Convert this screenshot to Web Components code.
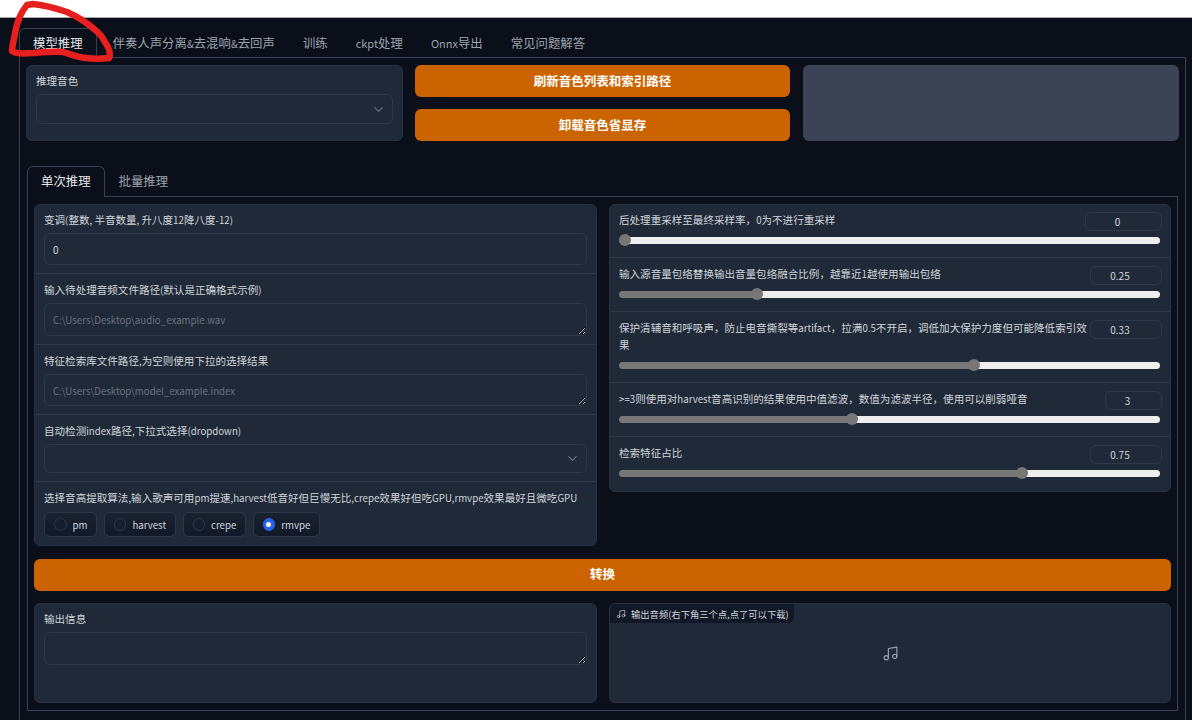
<!DOCTYPE html>
<html lang="zh">
<head>
<meta charset="utf-8">
<title>RVC</title>
<style>
    html, body { margin: 0; height: 720px; overflow: hidden; background: #0b0f19; }
    body { font-family: "Noto Sans CJK SC", "Noto Sans", sans-serif; color: #d1d5db; display: flex; flex-direction: column; }
</style>
</head>
<body>
<top-strip></top-strip>
<app-shell>
    <tab-strip>
        <tab-item active>模型推理</tab-item>
        <tab-item style="margin-left:2px">伴奏人声分离<span style="font-size:10px">&amp;</span>去混响<span style="font-size:10px">&amp;</span>去回声</tab-item>
        <tab-item>训练</tab-item>
        <tab-item><span style="font-size:11px">ckpt</span>处理</tab-item>
        <tab-item><span style="font-size:11px">Onnx</span>导出</tab-item>
        <tab-item>常见问题解答</tab-item>
    </tab-strip>
    <tab-panel>
        <top-row>
            <form-group>
                <text-field kind="select" label="推理音色" h="30" last></text-field>
            </form-group>
            <button-stack>
                <orange-btn>刷新音色列表和索引路径</orange-btn>
                <orange-btn>卸载音色省显存</orange-btn>
            </button-stack>
            <status-box></status-box>
        </top-row>
        <inner-tabs>
            <tab-strip inner>
                <tab-item active>单次推理</tab-item>
                <tab-item>批量推理</tab-item>
            </tab-strip>
            <inner-panel>
                <two-cols>
                    <form-group>
                        <text-field label="变调(整数, 半音数量, 升八度12降八度-12)" value="0" h="32"></text-field>
                        <text-field kind="area" label="输入待处理音频文件路径(默认是正确格式示例)" value="C:\Users\Desktop\audio_example.wav" h="33"></text-field>
                        <text-field kind="area" label="特征检索库文件路径,为空则使用下拉的选择结果" value="C:\Users\Desktop\model_example.index" h="32"></text-field>
                        <text-field kind="select" label="自动检测index路径,下拉式选择(dropdown)" h="29"></text-field>
                        <radio-field label="选择音高提取算法,输入歌声可用pm提速,harvest低音好但巨慢无比,crepe效果好但吃GPU,rmvpe效果最好且微吃GPU" options="pm,harvest,crepe,rmvpe" selected="rmvpe"></radio-field>
                    </form-group>
                    <form-group>
                        <slider-row label="后处理重采样至最终采样率，0为不进行重采样" value="0" f="0" w="77"></slider-row>
                        <slider-row label="输入源音量包络替换输出音量包络融合比例，越靠近1越使用输出包络" value="0.25" f="0.25" w="72"></slider-row>
                        <slider-row label="保护清辅音和呼吸声，防止电音撕裂等artifact，拉满0.5不开启，调低加大保护力度但可能降低索引效|果" value="0.33" f="0.66" w="72"></slider-row>
                        <slider-row label="&gt;=3则使用对harvest音高识别的结果使用中值滤波，数值为滤波半径，使用可以削弱哑音" value="3" f="0.4286" w="57"></slider-row>
                        <slider-row label="检索特征占比" value="0.75" f="0.75" w="72" last></slider-row>
                    </form-group>
                </two-cols>
                <orange-btn>转换</orange-btn>
                <two-cols>
                    <form-group>
                        <text-field kind="area" label="输出信息" h="33" tall last></text-field>
                    </form-group>
                    <audio-box label="输出音频(右下角三个点,点了可以下载)"></audio-box>
                </two-cols>
            </inner-panel>
        </inner-tabs>
    </tab-panel>
</app-shell>
<red-scribble></red-scribble>

<script>
// caja con estilos fijos y un slot, para no repetir lo mismo en cada clase
function simpleBox(name, css) {
    customElements.define(name, class extends HTMLElement {
        constructor() {
            super();
            this.attachShadow({ mode: 'open' });
            this.shadowRoot.innerHTML = `<style>${css}</style><slot></slot>`;
        }
    });
}

// las letras latinas salen mas pequeñas que los caracteres chinos en la captura
const latinSmall = text => text.replace(/[A-Za-z0-9,.\-()=> ]+/g, m => `<span style="font-size:9.7px;line-height:1">${m}</span>`);

simpleBox('top-strip', `:host { display: block; height: 17px; background: #fff; border-bottom: 1px solid #a8a8a8; flex: none; }`);
simpleBox('app-shell', `:host { display: flex; flex-direction: column; flex: 1; min-height: 0; padding: 10px 6px 0 19px; }`);
simpleBox('tab-panel', `:host { display: flex; flex-direction: column; flex: 1; min-height: 0; padding: 7px 6px 0; border: 1px solid #374151; border-width: 0 1px; }`);
simpleBox('top-row', `:host { display: grid; grid-template-columns: 376.5px 375px 1fr; gap: 12.5px; height: 76px; }`);
simpleBox('button-stack', `:host { display: flex; flex-direction: column; gap: 12px; }`);
simpleBox('status-box', `:host { display: block; background: #3b4354; border-radius: 6px; }`);
simpleBox('inner-tabs', `:host { display: block; margin: 25px 1px 0; }`);
simpleBox('inner-panel', `:host { display: flex; flex-direction: column; gap: 12.5px; padding: 7px 6px; border: 1px solid #374151; border-top: 0; }`);
simpleBox('two-cols', `:host { display: grid; grid-template-columns: 563px 562px; gap: 12px; align-items: start; }`);
simpleBox('form-group', `:host { display: block; background: #1f2937; border-radius: 6px; border: 1px solid #273142; box-sizing: border-box; overflow: hidden; }`);

class TabStrip extends HTMLElement {
    constructor() {
        super();
        this.attachShadow({ mode: 'open' });
    }

    connectedCallback() {
        this.shadowRoot.innerHTML = `
        <style>
            :host { display: flex; height: 29px; position: relative; border-bottom: 1px solid #374151; flex: none; }
            :host([inner]) { height: 30px; }
        </style>
        <slot></slot>`;
    }
}
customElements.define('tab-strip', TabStrip);

class TabItem extends HTMLElement {
    constructor() {
        super();
        this.attachShadow({ mode: 'open' });
        this.shadowRoot.innerHTML = `
        <style>
            :host {
                display: flex; align-items: baseline; height: 100%; padding: 4px 13px 0;
                font-size: 12.4px; line-height: 20px; color: #9ca3af; white-space: nowrap; box-sizing: border-box;
                border: 1px solid transparent; border-bottom: 0; border-radius: 6px 6px 0 0;
            }
            :host([active]) { color: #e5e7eb; border-color: #374151; background: #0b0f19; height: calc(100% + 1px); position: relative; }
        </style>
        <slot></slot>`;
    }
}
customElements.define('tab-item', TabItem);

class OrangeBtn extends HTMLElement {
    constructor() {
        super();
        this.attachShadow({ mode: 'open' });
        this.shadowRoot.innerHTML = `
        <style>
            :host {
                display: flex; align-items: center; justify-content: center; height: 32px;
                background: #cb6300; border-radius: 6px; box-sizing: border-box;
                color: #fff; font-size: 12.5px; font-weight: 700; padding-bottom: 2px;
            }
        </style>
        <slot></slot>`;
    }
}
customElements.define('orange-btn', OrangeBtn);

const CHEVRON = `<svg width="11" height="11" viewBox="0 0 24 24" fill="none" stroke="#6b7280" stroke-width="2.6" stroke-linecap="round" stroke-linejoin="round"><path d="M4 8l8 8 8-8"/></svg>`;

class TextField extends HTMLElement {
    constructor() {
        super();
        this.attachShadow({ mode: 'open' });
    }

    connectedCallback() {
        const kind = this.getAttribute('kind') || 'input';
        const value = this.getAttribute('value') || '';
        const h = this.getAttribute('h') || 32;
        let control;
        if (kind === 'area') {
            control = `<textarea class="box" spellcheck="false" style="height:${h}px">${value}</textarea>`;
        } else if (kind === 'select') {
            control = `<div class="box sel" style="height:${h}px">${CHEVRON}</div>`;
        } else {
            control = `<div class="box val" style="height:${h}px">${value}</div>`;
        }
        this.shadowRoot.innerHTML = `
        <style>
            :host { display: block; padding: 8px 9px; border-bottom: 1px solid #2d3748; }
            :host(:first-child) { padding-top: 7px; }
            :host([last]) { border-bottom: 0; }
            :host([tall]) { padding-bottom: 37px; }
            label { display: block; font-size: 10.55px; line-height: 16px; color: #d1d5db; margin-bottom: 5px; }
            .box {
                display: flex; align-items: center; box-sizing: border-box; width: 100%;
                background: #1f2937; border: 1px solid #2d3748; border-radius: 6px;
                padding: 0 8px; font: 9.7px/14px "Noto Sans CJK SC", "Noto Sans", sans-serif;
            }
            .val { color: #d1d5db; font-size: 10px; padding-top: 1px; }
            .sel { justify-content: flex-end; padding-right: 8px; }
            textarea { display: block; margin: 0; padding-top: 9px !important; color: #6b7280; outline: 0; resize: vertical; color-scheme: dark; }
        </style>
        <label>${latinSmall(this.getAttribute('label'))}</label>
        ${control}`;
    }
}
customElements.define('text-field', TextField);

class RadioField extends HTMLElement {
    constructor() {
        super();
        this.attachShadow({ mode: 'open' });
    }

    connectedCallback() {
        const sel = this.getAttribute('selected');
        const opts = this.getAttribute('options').split(',').map(o => `
            <span class="pill">
                <i class="dot ${o === sel ? 'on' : ''}"></i>${o}
            </span>`).join('');
        this.shadowRoot.innerHTML = `
        <style>
            :host { display: block; padding: 9px 9px 8px; }
            label { display: block; font-size: 10.55px; line-height: 14px; color: #d1d5db; margin-bottom: 7px; white-space: nowrap; }
            .opts { display: flex; gap: 6.4px; }
            .pill {
                display: flex; align-items: center; gap: 6px; height: 25px; padding: 0 9px;
                box-sizing: border-box; border: 1px solid #2d3748; border-radius: 6px;
                background: linear-gradient(to bottom, #1a2230, #111827);
                font-size: 9.7px; color: #d1d5db;
            }
            .dot { width: 12.5px; height: 12.5px; border-radius: 50%; background: #161e2d; border: 1px solid #2d3748; box-sizing: border-box; flex: none; }
            .dot.on { background: #2563eb; border-color: #2563eb; position: relative; }
            .dot.on::after { content: ""; position: absolute; left: 2.75px; top: 2.75px; width: 5px; height: 5px; border-radius: 50%; background: #fff; }
        </style>
        <label>${latinSmall(this.getAttribute('label'))}</label>
        <div class="opts">${opts}</div>`;
    }
}
customElements.define('radio-field', RadioField);

class SliderRow extends HTMLElement {
    constructor() {
        super();
        this.attachShadow({ mode: 'open' });
    }

    connectedCallback() {
        const f = parseFloat(this.getAttribute('f'));
        // cada linea va en su propio bloque, la | marca donde se corta
        const lines = this.getAttribute('label').split('|').map(l => `<span class="ln">${latinSmall(l)}</span>`).join('');
        this.shadowRoot.innerHTML = `
        <style>
            :host { display: block; padding: 8px 8px 13.5px 9px; border-bottom: 1px solid #2d3748; }
            :host(:first-child) { padding-top: 7px; }
            :host([last]) { border-bottom: 0; padding-bottom: 14.5px; }
            .head { display: flex; justify-content: space-between; align-items: flex-start; gap: 1px; }
            .txt { font-size: 10.55px; line-height: 17px; color: #d1d5db; margin-top: -1px; padding-bottom: 3px; }
            .ln { display: block; }
            .num {
                flex: none; height: 19px; box-sizing: border-box; border: 1px solid #2d3748; border-radius: 6px; padding: 0 12px 1px 0;
                display: flex; align-items: center; justify-content: center; font-size: 10px; color: #d1d5db;
            }
            .track {
                position: relative; height: 7px; margin: 5.5px 2px 0 0; border-radius: 3.5px;
                background: linear-gradient(to right, #777 calc(6px + (100% - 12px) * ${f}), #eeeeee 0);
            }
            .thumb {
                position: absolute; top: -2.5px; width: 12px; height: 12px; border-radius: 50%; background: #777;
                left: calc((100% - 12px) * ${f});
            }
        </style>
        <div class="head">
            <span class="txt">${lines}</span>
            <span class="num" style="width:${this.getAttribute('w')}px">${this.getAttribute('value')}</span>
        </div>
        <div class="track"><div class="thumb"></div></div>`;
    }
}
customElements.define('slider-row', SliderRow);

const NOTE = s => `<svg width="${s}" height="${s}" viewBox="0 0 24 24" fill="none" stroke="currentColor" stroke-width="1.6" stroke-linecap="round" stroke-linejoin="round"><path d="M9 18V5l12-2v13"/><circle cx="6" cy="18" r="3"/><circle cx="18" cy="16" r="3"/></svg>`;

class AudioBox extends HTMLElement {
    constructor() {
        super();
        this.attachShadow({ mode: 'open' });
    }

    connectedCallback() {
        this.shadowRoot.innerHTML = `
        <style>
            :host {
                display: flex; flex-direction: column; height: 100px; background: #1f2937; border-radius: 6px;
                border: 1px solid #273142; box-sizing: border-box; overflow: hidden; color: #9ca3af;
            }
            .chip {
                display: flex; align-items: center; gap: 5px; align-self: flex-start; height: 19px; padding: 0 5px 0 6px;
                background: #111827; border-radius: 0 0 6px 0; font-size: 9.3px; color: #d1d5db; white-space: nowrap;
            }
            .body { flex: 1; display: flex; align-items: center; justify-content: center; padding-bottom: 18px; }
        </style>
        <div class="chip">${NOTE(10)}<span>${this.getAttribute('label')}</span></div>
        <div class="body">${NOTE(17)}</div>`;
    }
}
customElements.define('audio-box', AudioBox);

class RedScribble extends HTMLElement {
    constructor() {
        super();
        this.attachShadow({ mode: 'open' });
        // el garabato rojo encima de la primera pestaña
        this.shadowRoot.innerHTML = `
        <style>:host { position: absolute; left: 0; top: 0; width: 130px; height: 70px; pointer-events: none; }</style>
        <svg width="130" height="70" viewBox="0 0 130 70" fill="none" stroke="#e81f1f" stroke-width="6.5" stroke-linecap="round" stroke-linejoin="round">
            <path d="M27 5C21 12 17 22 15 33C14 40 12 46 12 51C18 55 26 53 33 53C45 52 55 51 63 52C70 54 76 57 86 58C93 59 101 59 109 58C111 54 109 48 105 42C102 36 98 32 94 29C85 21 76 16 67 12C55 8 44 5 33 4Z"/>
        </svg>`;
    }
}
customElements.define('red-scribble', RedScribble);
</script>
</body>
</html>
